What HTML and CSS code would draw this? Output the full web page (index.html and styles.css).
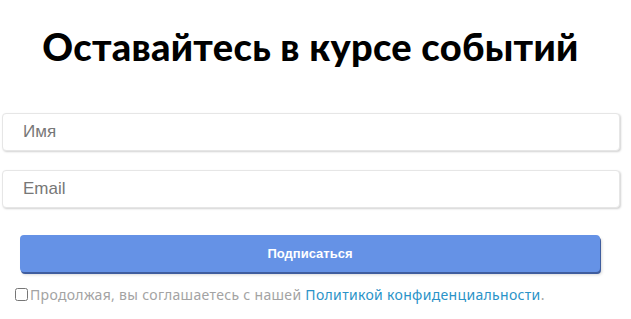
FILE: index.html
```html
<!DOCTYPE html>
<html lang="ru">
<head>
<meta charset="utf-8">
<title>Подписка</title>
<link rel="stylesheet" href="styles.css">
</head>
<body>
<div class="page">
  <h1 class="title">Оставайтесь в курсе событий</h1>
  <form class="form">
    <input class="field" type="text" placeholder="Имя">
    <input class="field" type="email" placeholder="Email">
    <button class="submit" type="button">Подписаться</button>
    <label class="consent">
      <input class="check" type="checkbox">
      <span class="consent-text">Продолжая, вы соглашаетесь с нашей <a class="link" href="#">Политикой конфиденциальности</a>.</span>
    </label>
  </form>
</div>
</body>
</html>
```

FILE: styles.css
```css
* { box-sizing: border-box; }
html, body { margin: 0; padding: 0; background: #fff; }
.page {
  width: 631px;
  padding: 23px 0 0 0;
}
.title {
  margin: 0;
  text-align: center;
  font-family: "Lato", sans-serif;
  font-weight: 900;
  font-size: 38px;
  line-height: 46px;
  color: #000;
  letter-spacing: 0.3px;
  padding-right: 10px;
}
.form {
  display: flex;
  flex-direction: column;
  padding: 44px 11px 0 2px;
}
.field {
  height: 38px;
  width: 618px;
  border: 1px solid #e6e6e6;
  border-radius: 4px;
  box-shadow: 1px 1px 2px rgba(0,0,0,0.18);
  padding: 0 20px;
  font-family: "Liberation Sans", Arial, sans-serif;
  font-size: 17px;
  color: #333;
  margin-bottom: 19px;
  outline: none;
}
.field::placeholder { color: #777; }
.field + .field { margin-bottom: 27px; }
.submit {
  align-self: flex-start;
  margin-left: 18px;
  width: 580px;
  height: 37px;
  border: none;
  border-radius: 4px;
  background: #6592e6;
  box-shadow: 1px 2px 0 #3f5d9e, 2px 3px 3px rgba(0,0,0,0.15);
  color: #fff;
  font-family: "Liberation Sans", Arial, sans-serif;
  font-weight: 700;
  font-size: 13px;
  cursor: pointer;
}
.consent {
  display: flex;
  align-items: center;
  margin: 13px 0 0 12px;
  font-family: "Noto Sans", sans-serif;
  font-size: 14px;
  letter-spacing: 0.32px;
  color: #a3a3a3;
}
.check {
  margin: 0 2px 0 1px;
  width: 13px;
  height: 13px;
}
.link { color: #2a93c8; text-decoration: none; }
```
